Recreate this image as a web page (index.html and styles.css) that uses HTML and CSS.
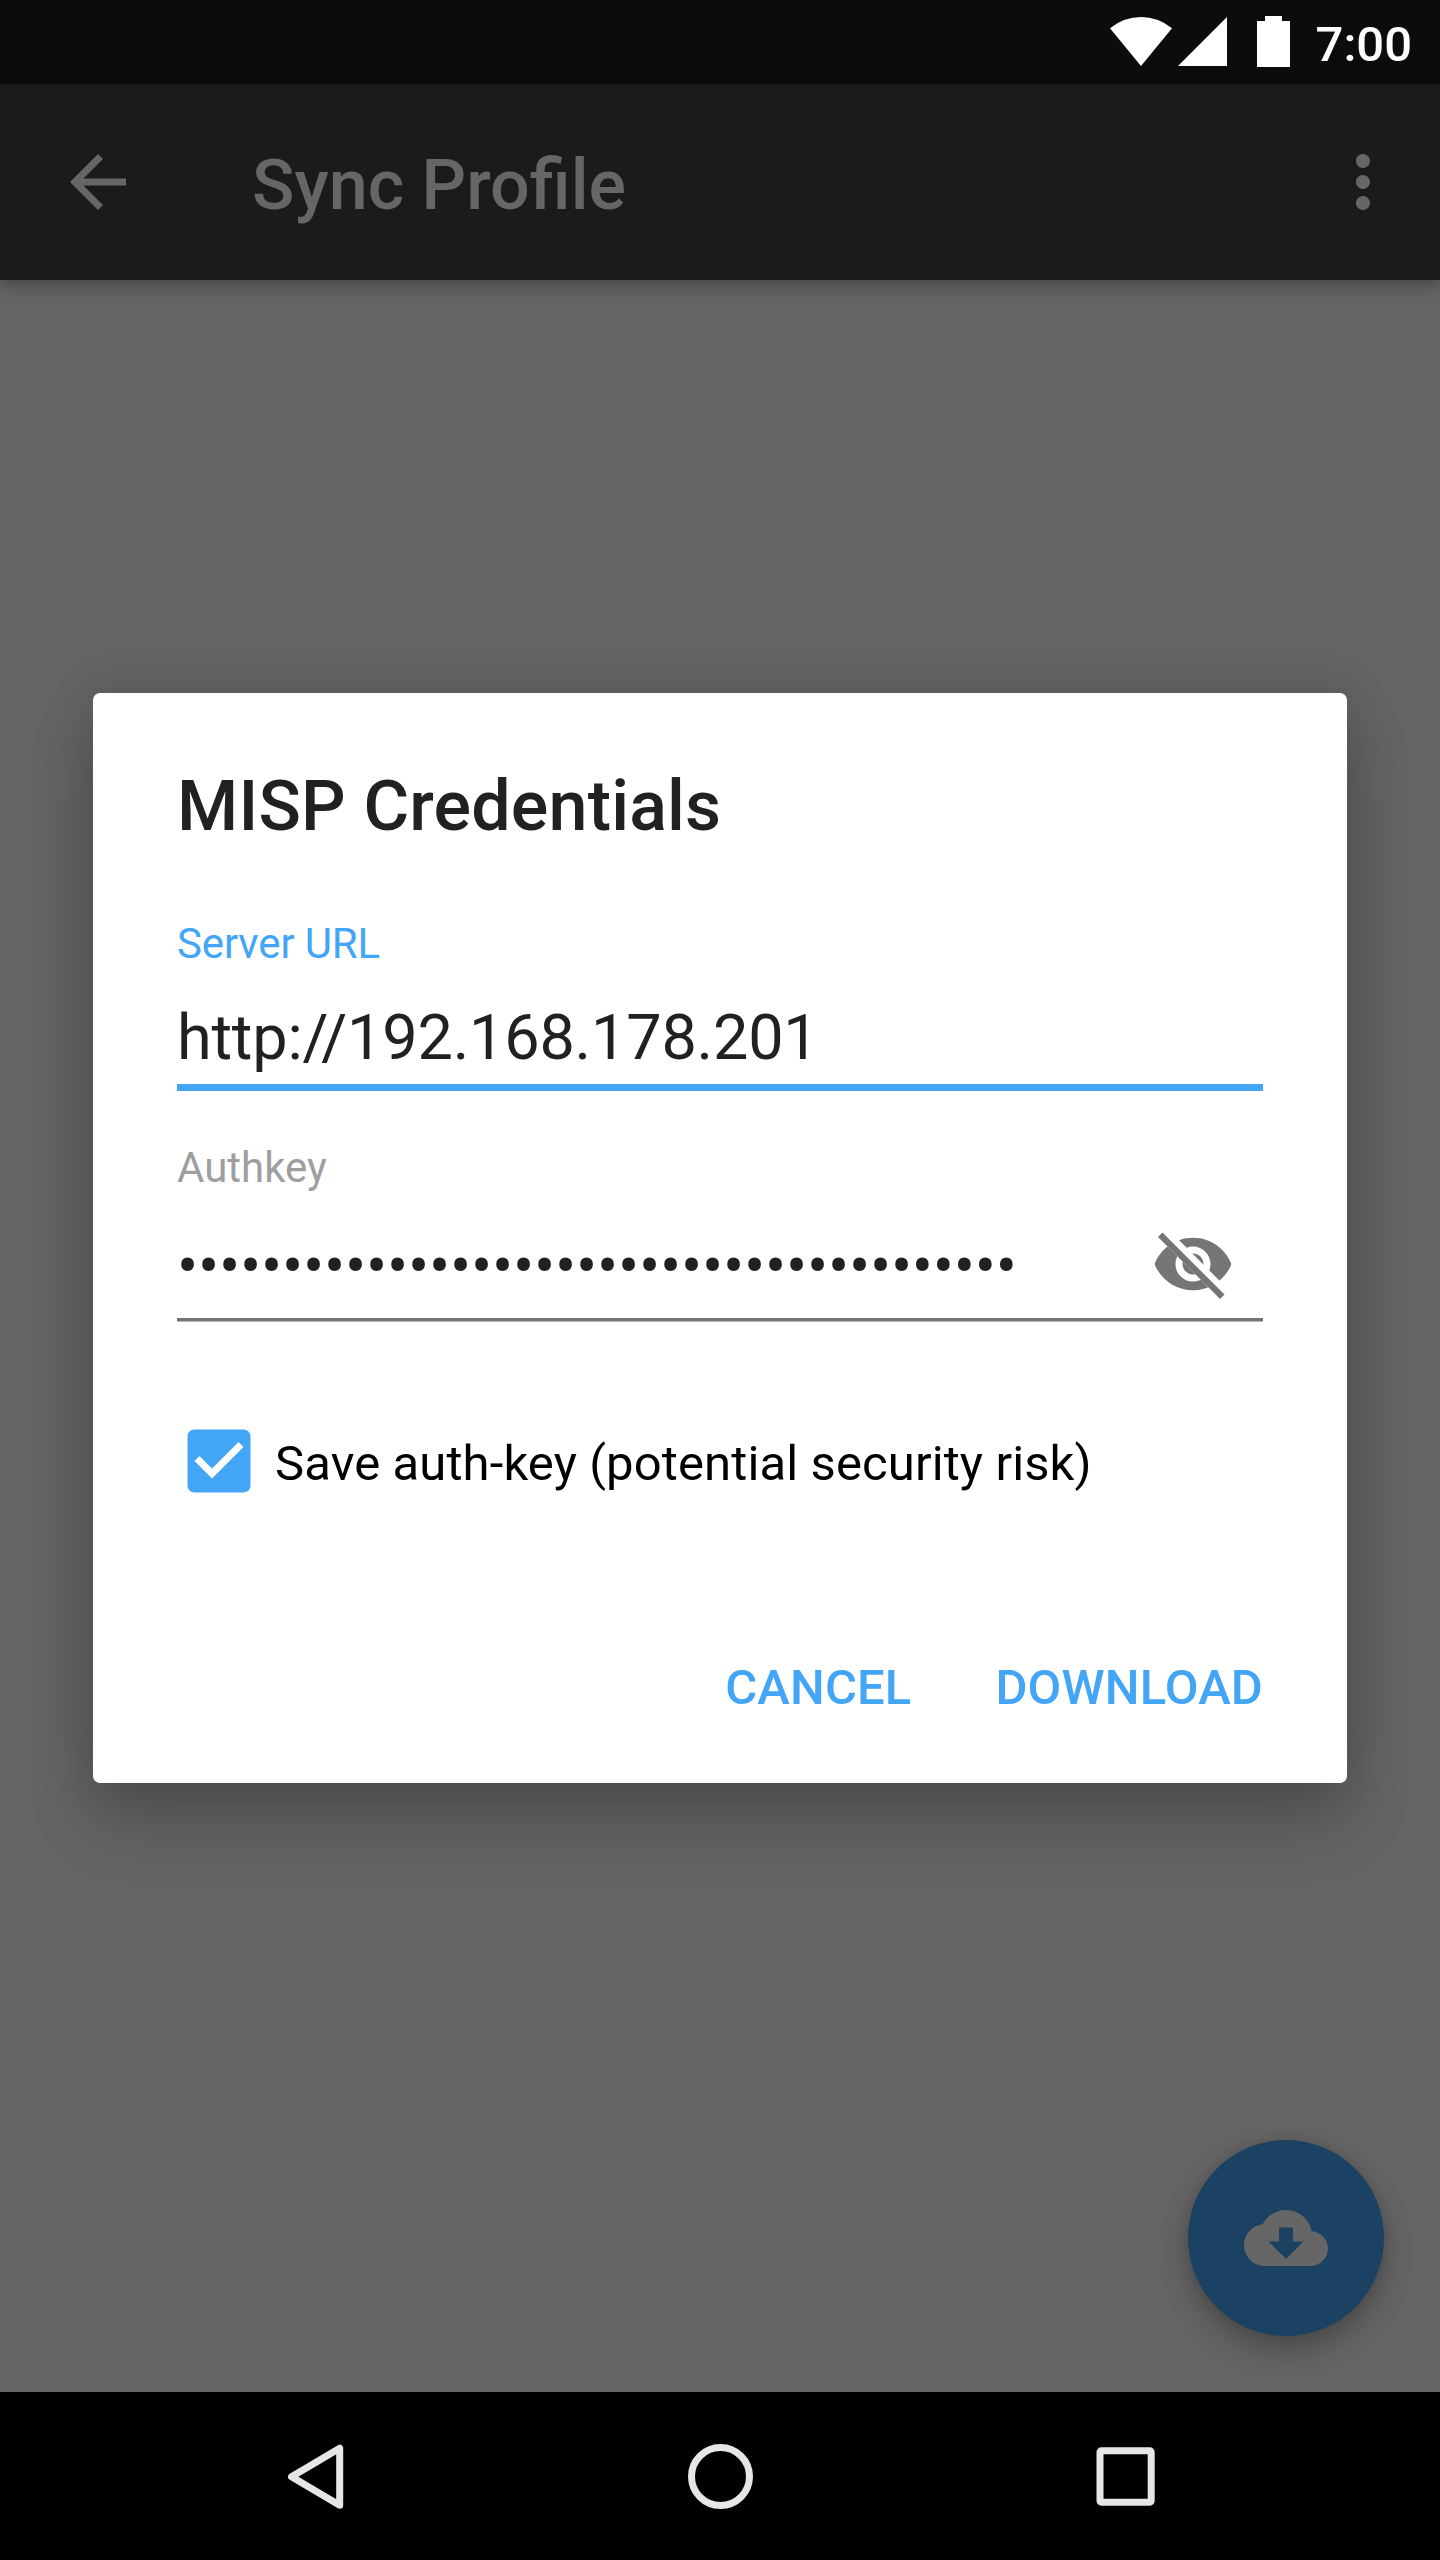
FILE: index.html
```html
<!DOCTYPE html>
<html lang="en">
<head>
<meta charset="utf-8">
<title>Sync Profile</title>
<link rel="stylesheet" href="styles.css">
</head>
<body>
<div class="screen">
  <header class="status">
    <svg class="status-icons" width="180" height="52" viewBox="0 0 180 52" fill="#fff">
      <path d="M0 12.200Q14 1 31 1T62 12.200L31 50Z"/>
      <path d="M117 1V50H68Z"/>
      <path d="M155 0h17v5h8v46h-33V5h8z"/>
    </svg>
    <span class="clock">7:00</span>
  </header>
  <div class="toolbar">
    <svg class="icon" viewBox="0 0 24 24"><path d="M20 11H7.830l5.590-5.590L12 4l-8 8 8 8 1.410-1.410L7.830 13H20v-2z"/></svg>
    <h1 class="toolbar-title">Sync Profile</h1>
    <svg class="icon" viewBox="0 0 24 24"><path d="M12 8c1.100 0 2-.9 2-2s-.9-2-2-2-2 .9-2 2 .9 2 2 2zm0 2c-1.100 0-2 .9-2 2s.9 2 2 2 2-.9 2-2-.9-2-2-2zm0 6c-1.100 0-2 .9-2 2s.9 2 2 2 2-.9 2-2-.9-2-2-2z"/></svg>
  </div>
  <main class="content">
    <section class="dialog">
      <h2 class="dialog-title">MISP Credentials</h2>
      <div class="label label-active">Server URL</div>
      <div class="field field-active"><span class="value">http://192.168.178.201</span></div>
      <div class="label label-second">Authkey</div>
      <div class="field field-idle">
        <span class="value dots">••••••••••••••••••••••••••••••••••••••••</span>
        <svg class="eye" viewBox="0 0 24 24">
          <defs><clipPath id="cut"><path d="M2 4.270L19.730 22l2.540-2.540L4.540 1.730V1H23v22H1V4.270z"/></clipPath></defs>
          <path clip-path="url(#cut)" d="M12 4.500C7 4.500 2.730 7.610 1 12c1.730 4.390 6 7.500 11 7.500s9.270-3.110 11-7.500c-1.730-4.390-6-7.500-11-7.500zM12 17c-2.760 0-5-2.240-5-5s2.240-5 5-5 5 2.240 5 5-2.240 5-5 5zM12 9c-1.660 0-3 1.340-3 3s1.340 3 3 3 3-1.340 3-3-1.340-3-3-3z"/>
          <path d="M3.270 4.270L19.740 20.740" stroke="#757575" stroke-width="1.800" stroke-linecap="square"/>
        </svg>
      </div>
      <div class="save">
        <svg class="check" viewBox="0 0 24 24"><path d="M19 3H5c-1.110 0-2 .9-2 2v14c0 1.100.89 2 2 2h14c1.110 0 2-.9 2-2V5c0-1.100-.89-2-2-2zm-9 14l-5-5 1.410-1.410L10 14.170l7.590-7.590L19 8l-9 9z"/></svg>
        <span class="save-text">Save auth-key (potential security risk)</span>
      </div>
      <div class="actions"><span>CANCEL</span><span>DOWNLOAD</span></div>
    </section>
    <div class="fab">
      <svg class="icon" viewBox="0 0 24 24"><path d="M19.350 10.040C18.670 6.590 15.640 4 12 4 9.110 4 6.600 5.640 5.350 8.040 2.340 8.360 0 10.910 0 14c0 3.310 2.690 6 6 6h13c2.760 0 5-2.240 5-5 0-2.640-2.050-4.780-4.650-4.960zM17 13l-5 5-5-5h3V9h4v4h3z"/></svg>
    </div>
  </main>
  <nav class="navbar">
    <svg class="nav-icon" viewBox="0 0 84 84"><path d="M66.700 14.200V71.200L18.500 42.700Z"/></svg>
    <svg class="nav-icon" viewBox="0 0 84 84"><circle cx="42.500" cy="42.500" r="29"/></svg>
    <svg class="nav-icon" viewBox="0 0 84 84"><rect x="17" y="16.800" width="51.200" height="51.400" rx="1.500"/></svg>
  </nav>
</div>
</body>
</html>
```
FILE: styles.css
```css
* { box-sizing: border-box; }
body { margin: 0; font-family: Roboto, "Liberation Sans", sans-serif; }
h1, h2 { margin: 0; font-weight: 500; }
svg { display: block; flex: none; }

.screen {
  width: 1440px;
  height: 2560px;
  display: flex;
  flex-direction: column;
  overflow: hidden;
  background: #646464;
}

.status {
  height: 84px;
  background: #0c0c0c;
  display: flex;
  justify-content: flex-end;
  padding: 16px 28px 0 0;
}
.status-icons { margin-right: 26px; }
.clock {
  color: #fff;
  font-size: 49px;
  font-weight: 500;
  line-height: 58px;
}

.toolbar {
  height: 196px;
  background: #1b1b1b;
  box-shadow: 0 6px 14px rgba(0, 0, 0, .28);
  display: flex;
  align-items: center;
  padding: 0 35px 0 56px;
}
.icon { width: 84px; height: 84px; fill: #666; }
.toolbar-title {
  flex: 1;
  margin-left: 112px;
  padding-top: 6px;
  font-size: 70px;
  line-height: 82px;
  color: #666;
}

.content {
  flex: 1;
  position: relative;
  padding: 413px 93px 0;
}
.dialog {
  height: 1090px;
  background: #fff;
  border-radius: 7px;
  padding: 72px 84px 0;
  box-shadow: 0 38px 66px rgba(0, 0, 0, .2), 0 0 50px rgba(0, 0, 0, .12);
}
.dialog-title { font-size: 70px; line-height: 82px; letter-spacing: .18px; color: #212121; }
.label { font-size: 42px; line-height: 50px; margin-top: 72px; }
.label-active { letter-spacing: -.15px; color: #42a5f5; }
.label-second { margin-top: 52px; color: #9e9e9e; }
.field {
  display: flex;
  align-items: center;
  justify-content: space-between;
}
.value { font-size: 63px; line-height: 74px; letter-spacing: -.22px; color: #212121; white-space: nowrap; }
.field-active { height: 122px; border-bottom: 7px solid #42a5f5; padding-top: 23px; }
.field-idle {
  height: 128px;
  border-bottom: 3px solid #757575;
  box-shadow: 0 1px #bababa;
  padding: 16px 28px 0 0;
}
.dots { letter-spacing: -.26px; padding-top: 7px; }
.eye { width: 84px; height: 84px; fill: #757575; }

.save { display: flex; align-items: center; margin-top: 97.500px; height: 84px; }
.check { width: 84px; height: 84px; fill: #42a5f5; }
.save-text {
  font-size: 49px;
  line-height: 58px;
  letter-spacing: .12px;
  margin-left: 14px;
  padding-top: 6px;
  color: #000;
}
.actions {
  display: flex;
  justify-content: flex-end;
  gap: 84px;
  margin-top: 156px;
  font-size: 49px;
  line-height: 58px;
  letter-spacing: .15px;
  font-weight: 500;
  color: #42a5f5;
}

.fab {
  position: absolute;
  right: 56px;
  bottom: 56px;
  width: 196px;
  height: 196px;
  border-radius: 50%;
  background: #1b4262;
  display: flex;
  align-items: center;
  justify-content: center;
  box-shadow: 0 14px 28px rgba(0, 0, 0, .25), 0 0 12px rgba(0, 0, 0, .1);
}

.navbar {
  height: 168px;
  background: #000;
  display: flex;
  justify-content: center;
  align-items: center;
  gap: 321px;
}
.nav-icon { width: 84px; height: 84px; fill: none; stroke: #e6e6e6; stroke-width: 7; stroke-linejoin: round; }
```
